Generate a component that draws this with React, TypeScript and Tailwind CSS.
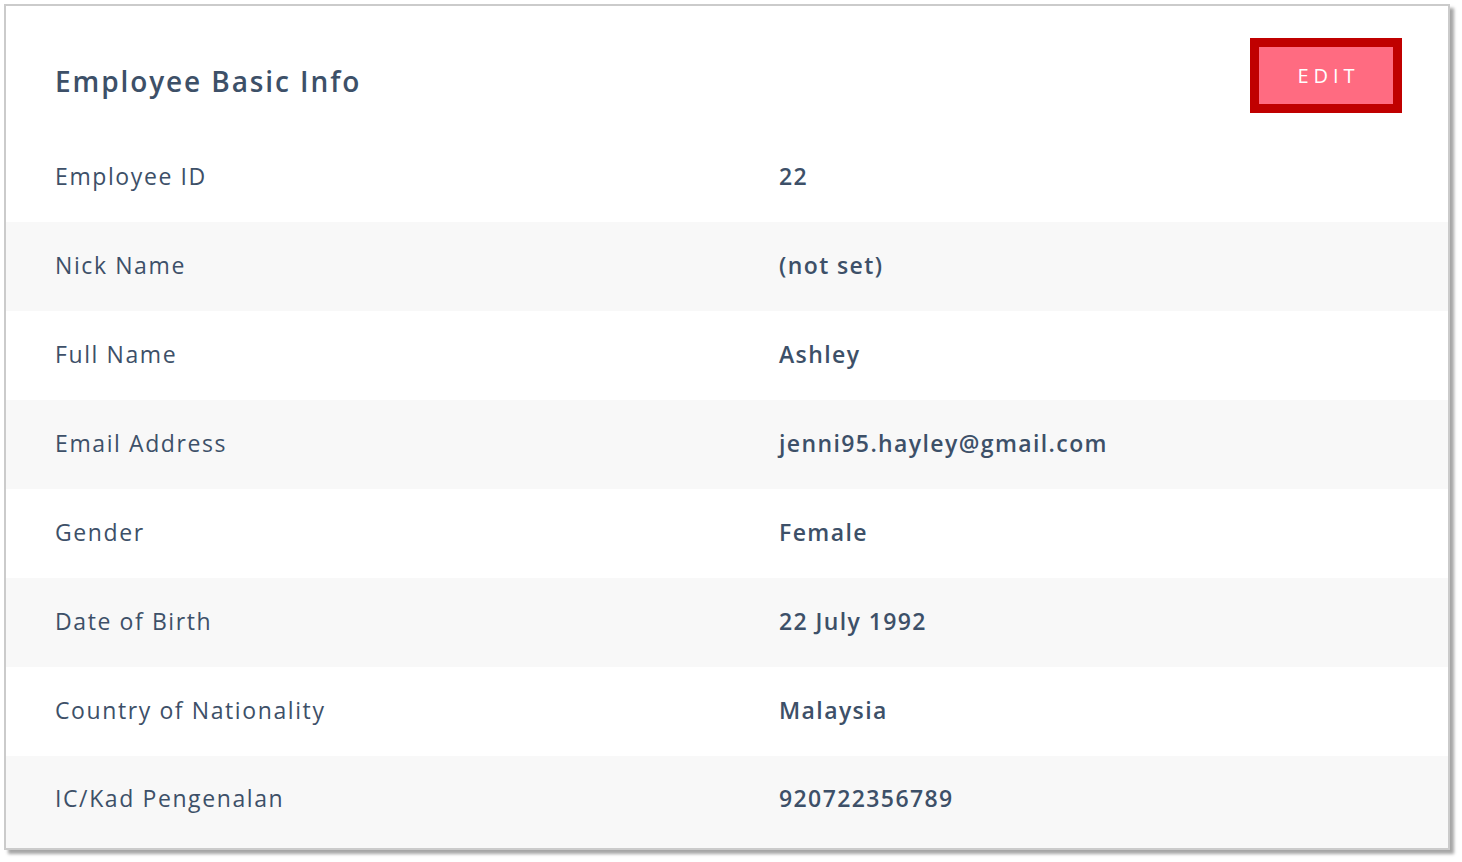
import React from 'react';

const rows: { label: string; value: string }[] = [
  { label: 'Employee ID', value: '22' },
  { label: 'Nick Name', value: '(not set)' },
  { label: 'Full Name', value: 'Ashley' },
  { label: 'Email Address', value: 'jenni95.hayley@gmail.com' },
  { label: 'Gender', value: 'Female' },
  { label: 'Date of Birth', value: '22 July 1992' },
  { label: 'Country of Nationality', value: 'Malaysia' },
  { label: 'IC/Kad Pengenalan', value: '920722356789' },
];

const App: React.FC = () => {
  return (
    <div className="w-[1462px] h-[862px] bg-white p-1 font-['Open_Sans',sans-serif] text-[#3d5068]">
      <div className="w-[1446px] h-[846px] border-2 border-[#cbcbcb] bg-white shadow-[4px_4px_3px_rgba(0,0,0,0.35)] flex flex-col">
        {/* header */}
        <div className="h-[127px] shrink-0 flex items-start justify-between pl-[49px] pr-[46px]">
          <h2 className="mt-[57px] text-[28px] leading-[36px] font-semibold tracking-[1.9px]">Employee Basic Info</h2>
          <button className="mt-[32px] w-[152px] h-[75px] border-[9px] border-[#c00000] bg-[#ff6b81] text-white text-[20px] tracking-[5px] font-normal pl-[5px]">
            EDIT
          </button>
        </div>

        {/* rows */}
        <div className="flex-1 flex flex-col">
          {rows.map((r, i) => (
            <div
              key={r.label}
              className={`h-[89px] pb-[3px] last:flex-1 last:pb-[8px] flex items-center text-[23px] ${i % 2 === 1 ? 'bg-[#f8f8f8]' : 'bg-white'}`}
            >
              <div className="w-[773px] pl-[49px] tracking-[1.6px]">{r.label}</div>
              <div className="font-semibold tracking-[1.4px]">{r.value}</div>
            </div>
          ))}
        </div>
      </div>
    </div>
  );
};

export default App;
